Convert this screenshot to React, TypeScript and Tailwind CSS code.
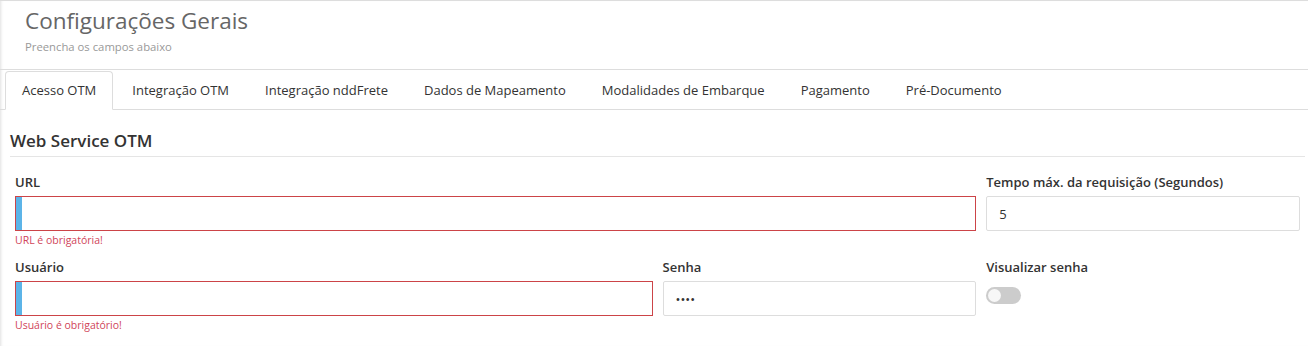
import React, { useState } from 'react';

const font = "font-['Segoe_UI','Open_Sans',sans-serif]";

const tabs = [
    'Acesso OTM',
    'Integração OTM',
    'Integração nddFrete',
    'Dados de Mapeamento',
    'Modalidades de Embarque',
    'Pagamento',
    'Pré-Documento',
];

// campo obrigatório com barra azul à esquerda
const RequiredInput: React.FC<{ error: string }> = ({ error }) => (
    <div>
        <div className="flex h-[35px] border border-[#cc4448] bg-white">
            <div className="w-[6px] bg-[#5cb4e8]" />
            <input className="flex-1 px-2 text-[13px] text-[#555] outline-none" />
        </div>
        <div className="mt-[2px] text-[10.5px] leading-[14px] text-[#d0455a]">{error}</div>
    </div>
);

const Label: React.FC<{ children: React.ReactNode }> = ({ children }) => (
    <label className="mb-[4px] block text-[13px] font-semibold leading-[20px] text-[#333]">{children}</label>
);

const App: React.FC = () => {
    const [active, setActive] = useState(0);
    const [showPass, setShowPass] = useState(false);

    return (
        <div className={`${font} min-h-[346px] border-t border-[#ddd] bg-white shadow-[inset_3px_0_3px_-2px_rgba(0,0,0,0.12)]`}>
            {/* Cabeçalho */}
            <div className="border-b border-[#ddd] pt-[5px] pb-[14px] pl-[25px]">
                <h1 className="text-[22.5px] font-normal leading-[30px] text-[#666]">Configurações Gerais</h1>
                <p className="mt-[3px] text-[11.3px] leading-[16px] text-[#999]">Preencha os campos abaixo</p>
            </div>

            {/* Abas */}
            <ul className="flex gap-[2px] border-b border-[#ddd] px-[5px] pt-[1px]">
                {tabs.map((t, i) => (
                    <li
                        key={t}
                        onClick={() => setActive(i)}
                        className={`-mb-px cursor-pointer rounded-t-[4px] border px-[16px] py-[9px] text-[13px] leading-[19px] text-[#333] ${
                            active === i ? 'border-[#ddd] border-b-white bg-white' : 'border-transparent'
                        }`}
                    >
                        {t}
                    </li>
                ))}
            </ul>

            {/* Conteúdo */}
            <div className="pl-[10px] pr-[3px]">
                <h2 className="mt-[19px] border-b border-[#e5e5e5] pb-[3px] text-[17px] font-semibold leading-[24px] text-[#333]">
                    Web Service OTM
                </h2>

                <div className="mt-[15px] grid grid-cols-4">
                    <div className="col-span-3 px-[5px]">
                        <Label>URL</Label>
                        <RequiredInput error="URL é obrigatória!" />
                    </div>
                    <div className="px-[5px]">
                        <Label>Tempo máx. da requisição (Segundos)</Label>
                        <input
                            defaultValue="5"
                            className="h-[35px] w-full rounded-[2px] border border-[#ddd] px-[12px] text-[13px] text-[#333] outline-none"
                        />
                    </div>
                </div>

                <div className="mt-[10px] grid grid-cols-4">
                    <div className="col-span-2 px-[5px]">
                        <Label>Usuário</Label>
                        <RequiredInput error="Usuário é obrigatório!" />
                    </div>
                    <div className="px-[5px]">
                        <Label>Senha</Label>
                        <input
                            type={showPass ? 'text' : 'password'}
                            defaultValue="1234"
                            className="h-[35px] w-full rounded-[2px] border border-[#ddd] px-[12px] text-[13px] text-[#333] outline-none"
                        />
                    </div>
                    <div className="px-[5px]">
                        <Label>Visualizar senha</Label>
                        <button
                            onClick={() => setShowPass(!showPass)}
                            className={`mt-[10px] flex h-[17px] w-[35px] items-center rounded-full px-[2px] ${showPass ? 'justify-end bg-[#5cb4e8]' : 'bg-[#ccc]'}`}
                        >
                            <span className="h-[13px] w-[13px] rounded-full bg-[#f7f7f7]" />
                        </button>
                    </div>
                </div>
            </div>
        </div>
    );
};

export default App;
